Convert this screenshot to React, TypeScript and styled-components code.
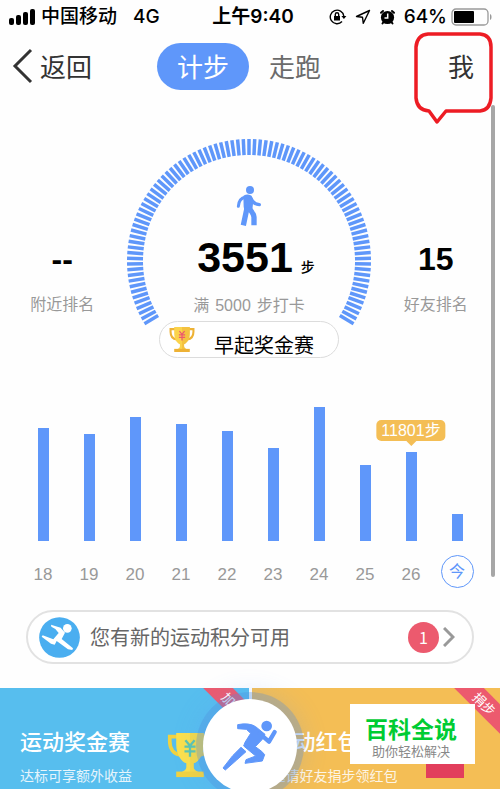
import React from 'react';
import styled, { createGlobalStyle } from 'styled-components';

const BLUE = '#5f97fa';
const sans = '"Liberation Sans", "Noto Sans CJK SC", sans-serif';
const cjk = '"Noto Sans CJK SC", sans-serif';

const GlobalStyle = createGlobalStyle`
  * { box-sizing: border-box; }
  body { margin: 0; background: #fefefe; font-family: ${sans}; }
  button { border: 0; padding: 0; background: none; font-family: inherit; cursor: pointer; }
  a { color: inherit; text-decoration: none; }
  svg { display: block; flex: none; }
`;

const Page = styled.div`
  position: relative;
  display: flex;
  flex-direction: column;
  min-height: 100vh;
  overflow: hidden;
`;

const StatusBar = styled.div`
  display: grid;
  grid-template-columns: 1fr auto 1fr;
  align-items: center;
  height: 32px;
  padding: 2px 8px 0;
  font: 500 19px/30px Inter, ${cjk};
  color: #000;
`;
const StatusGroup = styled.div<{ $end?: boolean }>`
  display: flex;
  align-items: center;
  gap: ${(p) => (p.$end ? 8 : 6)}px;
  justify-content: ${(p) => (p.$end ? 'flex-end' : 'flex-start')};
`;
const Network = styled.span`
  margin-left: 10px;
`;
const Clock = styled.span`
  font-weight: 600;
  padding-left: 6px;
`;
const Power = styled.span`
  display: flex;
  align-items: center;
  gap: 4px;
`;

const Header = styled.header`
  display: grid;
  grid-template-columns: 1fr auto 1fr;
  align-items: center;
  height: 68px;
  padding: 0 26px 0 12px;
  font-family: ${cjk};
`;
const BackButton = styled.button`
  display: flex;
  align-items: center;
  gap: 6px;
  font: 400 26px/38px ${cjk};
  color: #333;
`;
const Tabs = styled.nav`
  display: flex;
  align-items: center;
  gap: 20px;
  margin-right: 8px;
`;
const Tab = styled.button<{ $active?: boolean }>`
  height: 47px;
  padding: ${(p) => (p.$active ? '0 20px' : '0')};
  border-radius: 24px;
  background: ${(p) => (p.$active ? BLUE : 'transparent')};
  color: ${(p) => (p.$active ? '#fff' : '#6b6b6b')};
  font: 400 26px/46px ${cjk};
`;
const MeLink = styled.a`
  position: relative;
  justify-self: end;
  font-size: 26px;
  line-height: 38px;
  color: #333;
`;
const Callout = styled.svg`
  position: absolute;
  top: -15px;
  right: -20px;
  pointer-events: none;
`;

const Summary = styled.section`
  display: grid;
  grid-template-columns: 1fr 2fr 1fr;
  margin-top: 39px;
  padding-right: 2px;
  height: 182px;
`;
const Stat = styled.div`
  display: flex;
  flex-direction: column;
  align-items: center;
  justify-content: flex-end;
  padding-bottom: 4px;
`;
const StatValue = styled.strong`
  font: 700 32px/44px "Liberation Sans Narrow", "Liberation Sans", sans-serif;
  color: #000;
`;
const Caption = styled.span`
  display: flex;
  gap: 6px;
  font-size: 16px;
  line-height: 24px;
  color: #999;
  white-space: nowrap;
`;
const StatCaption = styled(Caption)`
  margin-top: 12px;
`;
const Gauge = styled.div`
  display: grid;
  justify-items: center;
  > * { grid-area: 1 / 1; }
`;
const Dial = styled.svg`
  overflow: visible;
`;
const GaugeContent = styled.div`
  display: flex;
  flex-direction: column;
  align-items: center;
  padding-top: 47px;
`;
const StepCount = styled.div`
  display: flex;
  align-items: baseline;
  gap: 8px;
  margin: 4px 0 10px 14px;
  font: 700 43px/54px "Liberation Sans Narrow", "Liberation Sans", sans-serif;
  color: #000;
`;
const Unit = styled.span`
  font: 500 14px/20px ${cjk};
`;

const RaceButton = styled.button`
  align-self: center;
  display: flex;
  align-items: center;
  width: 180px;
  height: 37px;
  margin-right: 2px;
  padding: 0 9px;
  gap: 19px;
  border: 1px solid #dcdcdc;
  border-radius: 19px;
  background: #fff;
  font: 400 20px/24px ${cjk};
  color: #000;
`;
const RaceLabel = styled.span`
  padding-top: 10px;
`;

const Chart = styled.section`
  display: grid;
  grid-template-columns: repeat(10, 1fr);
  padding: 0 20px;
`;
const Day = styled.div`
  display: flex;
  flex-direction: column;
  align-items: center;
`;
const Plot = styled.div`
  display: flex;
  align-items: flex-end;
  height: 183px;
`;
const Bar = styled.div`
  position: relative;
  width: 11px;
  background: ${BLUE};
`;
const Tip = styled.span`
  position: absolute;
  left: 50%;
  bottom: calc(100% + 11px);
  transform: translateX(-50%);
  padding: 0 5px;
  border-radius: 5px;
  background: #f4be55;
  color: #fff;
  font-size: 16px;
  line-height: 21px;
  white-space: nowrap;
  &::after {
    content: '';
    position: absolute;
    left: 50%;
    top: 100%;
    margin-left: -5px;
    border: 5px solid transparent;
    border-top-color: #f4be55;
    border-bottom: 0;
  }
`;
const DayLabel = styled.span<{ $today?: boolean }>`
  display: grid;
  place-items: center;
  width: 33px;
  height: 33px;
  margin-top: 14px;
  padding-top: ${(p) => (p.$today ? 0 : 6)}px;
  border: ${(p) => (p.$today ? `1px solid ${BLUE}` : '0')};
  border-radius: 50%;
  font-size: ${(p) => (p.$today ? 16 : 17)}px;
  line-height: 20px;
  color: ${(p) => (p.$today ? BLUE : '#999')};
`;

const Notice = styled.a`
  display: flex;
  align-items: center;
  height: 54px;
  margin: 22px 26px 0;
  padding: 0 17px 0 11px;
  border: 2px solid #e2e2e2;
  border-radius: 27px;
  background: #fff;
  font: 400 20px/30px ${cjk};
  color: #666;
`;
const NoticeText = styled.span`
  flex: 1;
  margin-left: 10px;
`;
const Count = styled.span`
  width: 31px;
  height: 31px;
  margin-right: 4px;
  border-radius: 50%;
  background: #ec5a6e;
  color: #fff;
  font: 400 16px/31px ${cjk};
  text-align: center;
`;

const Promos = styled.section`
  position: relative;
  flex: 1;
  display: grid;
  grid-template-columns: 1fr 1fr;
  gap: 3px;
  min-height: 101px;
  margin-top: 24px;
`;
const Promo = styled.a<{ $color: string }>`
  position: relative;
  overflow: hidden;
  display: flex;
  justify-content: space-between;
  padding: 36px 36px 0 20px;
  background: ${(p) => p.$color};
  color: #fff;
  font-family: ${cjk};
  white-space: nowrap;
`;
const PromoTitle = styled.h2`
  margin: 0;
  font-size: 22px;
  font-weight: 500;
  line-height: 32px;
`;
const PromoText = styled.p`
  margin: 8px 0 0;
  font-size: 14px;
  line-height: 22px;
  opacity: 0.85;
`;
const PromoArt = styled.svg`
  margin-top: 7px;
`;
const Packet = styled.span`
  width: 38px;
  height: 54px;
  background: #e23e5c;
`;
const Ribbon = styled.span`
  position: absolute;
  top: 5px;
  right: -25px;
  width: 81px;
  height: 21px;
  transform: rotate(45deg);
  background: #ec5a6e;
  font-size: 13px;
  line-height: 21px;
  text-align: center;
`;
const RunButton = styled.button`
  position: absolute;
  top: 11px;
  left: 50%;
  display: grid;
  place-items: center;
  width: 94px;
  height: 94px;
  margin-left: -47px;
  border-radius: 50%;
  background: #fff;
  box-shadow: 0 0 0 7px rgba(80, 140, 220, 0.3), 0 0 26px 6px rgba(95, 151, 250, 0.2);
`;
const Watermark = styled.aside`
  position: absolute;
  top: 16px;
  right: 25px;
  width: 125px;
  height: 60px;
  padding: 8px 3px 0 0;
  background: #fff;
  font-family: ${cjk};
  text-align: center;
`;
const Brand = styled.div`
  font-size: 23px;
  font-weight: 700;
  line-height: 32px;
  color: #00cc33;
`;
const Slogan = styled.div`
  font-size: 13px;
  line-height: 13px;
  color: #888;
`;
const ScrollThumb = styled.div`
  position: absolute;
  top: 105px;
  right: 5px;
  width: 4px;
  height: 472px;
  border-radius: 2px;
  background: #a6a6a6;
`;

const TICKS = Array.from({ length: 91 }, (_, i) => -121 + (i * 242) / 90);

const DAYS = [
  { label: '18', height: 113 },
  { label: '19', height: 107 },
  { label: '20', height: 124 },
  { label: '21', height: 117 },
  { label: '22', height: 110 },
  { label: '23', height: 93 },
  { label: '24', height: 134 },
  { label: '25', height: 76 },
  { label: '26', height: 89, tip: '11801步' },
  { label: '今', height: 27, today: true },
];

function TrophyShape({ cup, shade, mark }: { cup: string; shade: string; mark: string }) {
  return (
    <>
      <path d="M12 5H3v5c0 8 4 14 12 15M38 5h9v5c0 8-4 14-12 15" fill="none" stroke={shade} strokeWidth="4" />
      <path d="M10 1h30v12c0 11-5 19-11 21v4c0 3 3 5 7 6H14c4-1 7-3 7-6v-4C15 32 10 24 10 13z" fill={cup} />
      <path d="M25 1h15v12c0 11-5 19-11 21v4c0 3 3 5 7 6H25z" fill={shade} opacity="0.5" />
      <path d="M10 43h30v6H10z" fill={shade} />
      <path d="M20 9l5 6 5-6M25 15v12M19 16h12M19 21h12" fill="none" stroke={mark} strokeWidth="2.5" />
    </>
  );
}

export default function App() {
  return (
    <Page>
      <GlobalStyle />
      <StatusBar>
        <StatusGroup>
          <svg width="27" height="16" viewBox="0 0 27 16">
            <rect x="1" y="9" width="5" height="7" rx="2" />
            <rect x="8" y="6" width="5" height="10" rx="2" />
            <rect x="15" y="3" width="5" height="13" rx="2" />
            <rect x="22" y="0" width="5" height="16" rx="2" />
          </svg>
          <span>中国移动</span>
          <Network>4G</Network>
        </StatusGroup>
        <Clock>上午9:40</Clock>
        <StatusGroup $end>
          <svg width="18" height="16" viewBox="0 0 18 16" fill="none" stroke="#000" strokeWidth="1.4">
            <path d="M13 12.6A6.8 6.8 0 1 1 14.8 7" />
            <path d="M12.4 7h5l-2.5 3z" fill="#000" stroke="none" />
            <rect x="5" y="7" width="6" height="4.500" fill="#000" stroke="none" />
            <path d="M6.300 7V5.500a1.700 1.700 0 0 1 3.400 0V7" />
          </svg>
          <svg width="16" height="16" viewBox="0 0 16 16" fill="none" stroke="#000" strokeWidth="1.4" strokeLinejoin="round">
            <path d="M14.500 1.500L1.500 7.500l6 .8.8 6z" />
          </svg>
          <svg width="17" height="16" viewBox="0 0 17 16">
            <circle cx="8.500" cy="8.500" r="6.600" />
            <path d="M2 3.800L4 2M15 3.800L13 2M4.500 13l-1 1.500M12.500 13l1 1.500" stroke="#000" strokeWidth="2" strokeLinecap="round" />
            <path d="M8.700 4.500v4.400H5.500" fill="none" stroke="#fff" strokeWidth="1.500" />
          </svg>
          <Power>
            64%
            <svg width="41" height="18" viewBox="0 0 41 18">
              <rect x="1" y="1" width="36" height="16" rx="4" fill="none" stroke="#999" strokeWidth="1.300" />
              <rect x="3" y="3" width="20" height="12" rx="1" />
              <path d="M39 6c2 .5 2 5.500 0 6z" fill="#999" />
            </svg>
          </Power>
        </StatusGroup>
      </StatusBar>

      <Header>
        <BackButton>
          <svg width="22" height="36" viewBox="0 0 22 36" fill="none" stroke="#333" strokeWidth="3">
            <path d="M19 2L3 18l16 16" />
          </svg>
          返回
        </BackButton>
        <Tabs>
          <Tab $active>计步</Tab>
          <Tab>走跑</Tab>
        </Tabs>
        <MeLink href="#me">
          我
          <Callout width="80" height="92" viewBox="0 0 80 92" fill="none" stroke="#ed1c24" strokeWidth="3.500" strokeLinejoin="round">
            <path d="M14 2H66Q77 3 77 15V66Q76 78 66 79H32L23 90 15 79Q3 78 2 66V15Q3 3 14 2Z" />
          </Callout>
        </MeLink>
      </Header>

      <Summary>
        <Stat>
          <StatValue>--</StatValue>
          <StatCaption>附近排名</StatCaption>
        </Stat>
        <Gauge>
          <Dial width="244" height="182" viewBox="0 0 244 182">
            {TICKS.map((angle) => (
              <path key={angle} d="M122 0v16" stroke={BLUE} strokeWidth="3.500" transform={`rotate(${angle} 122 122)`} />
            ))}
          </Dial>
          <GaugeContent>
            <svg width="26" height="40" viewBox="0 0 78 120" fill="none" stroke={BLUE} strokeLinecap="round" strokeLinejoin="round">
              <circle cx="42" cy="12" r="12" fill={BLUE} stroke="none" />
              <path d="M25 31Q34 26 44 31L49 44 46 72 28 74 26 62z" fill={BLUE} strokeWidth="6" />
              <path d="M28 34Q9 37 7 61" strokeWidth="9" />
              <path d="M44 36Q52 55 70 56" strokeWidth="10" />
              <path d="M33 66L22 118M38 66Q53 82 54 94V118" strokeWidth="16" strokeLinecap="butt" />
            </svg>
            <StepCount>
              3551
              <Unit>步</Unit>
            </StepCount>
            <Caption>
              <span>满</span>
              <span>5000</span>
              <span>步打卡</span>
            </Caption>
          </GaugeContent>
        </Gauge>
        <Stat>
          <StatValue>15</StatValue>
          <StatCaption>好友排名</StatCaption>
        </Stat>
      </Summary>

      <RaceButton>
        <svg width="26" height="27" viewBox="0 0 50 50">
          <TrophyShape cup="#fbd34b" shade="#eeb235" mark="#ec5a6e" />
        </svg>
        <RaceLabel>早起奖金赛</RaceLabel>
      </RaceButton>

      <Chart>
        {DAYS.map((day) => (
          <Day key={day.label}>
            <Plot>
              <Bar style={{ height: day.height }}>{day.tip && <Tip>{day.tip}</Tip>}</Bar>
            </Plot>
            <DayLabel $today={day.today}>{day.label}</DayLabel>
          </Day>
        ))}
      </Chart>

      <Notice href="#points">
        <svg width="41" height="41" viewBox="0 0 123 123">
          <circle cx="61.500" cy="61.500" r="61" fill="#4aaef0" />
          <circle cx="85" cy="34" r="13" fill="#fff" />
          <path d="M36 23L65 32 78 47 68 66 102 94 100 99 87 97 53 72 47 83 36 80 8 59 11 55 43 67 59 48 49 36 37 29z" fill="#fff" />
        </svg>
        <NoticeText>您有新的运动积分可用</NoticeText>
        <Count>1</Count>
        <svg width="12" height="20" viewBox="0 0 12 20" fill="none" stroke="#999" strokeWidth="3">
          <path d="M1 1l9 9-9 9" />
        </svg>
      </Notice>

      <Promos>
        <Promo href="#race" $color="#57beee">
          <div>
            <PromoTitle>运动奖金赛</PromoTitle>
            <PromoText>达标可享额外收益</PromoText>
          </div>
          <PromoArt width="46" height="48" viewBox="0 0 50 50">
            <TrophyShape cup="#fbe04b" shade="#f1d240" mark="#5cc5b0" />
          </PromoArt>
          <Ribbon>加倍</Ribbon>
        </Promo>
        <Promo href="#packet" $color="#f4be55">
          <div>
            <PromoTitle>运动红包</PromoTitle>
            <PromoText>邀请好友捐步领红包</PromoText>
          </div>
          <Packet />
          <Ribbon>捐步</Ribbon>
        </Promo>
        <RunButton aria-label="开始跑步">
          <svg width="58" height="54" viewBox="0 0 174 162" fill="none" stroke={BLUE} strokeLinejoin="round">
            <circle cx="137" cy="21" r="16" fill={BLUE} stroke="none" />
            <path d="M50 17Q84 10 104 23L132 46 124 61 103 83 122 97 131 107 124 126 72 133 75 122 104 111 68 81 72 70 89 43 76 31 50 29z" fill={BLUE} strokeWidth="3" />
            <path d="M116 44L144 68 161 39" strokeWidth="13" strokeLinecap="round" />
            <path d="M60 85L75 98 46 124 13 153 6 147 35 110z" fill={BLUE} strokeWidth="3" />
          </svg>
        </RunButton>
        <Watermark>
          <Brand>百科全说</Brand>
          <Slogan>助你轻松解决</Slogan>
        </Watermark>
      </Promos>
      <ScrollThumb />
    </Page>
  );
}
